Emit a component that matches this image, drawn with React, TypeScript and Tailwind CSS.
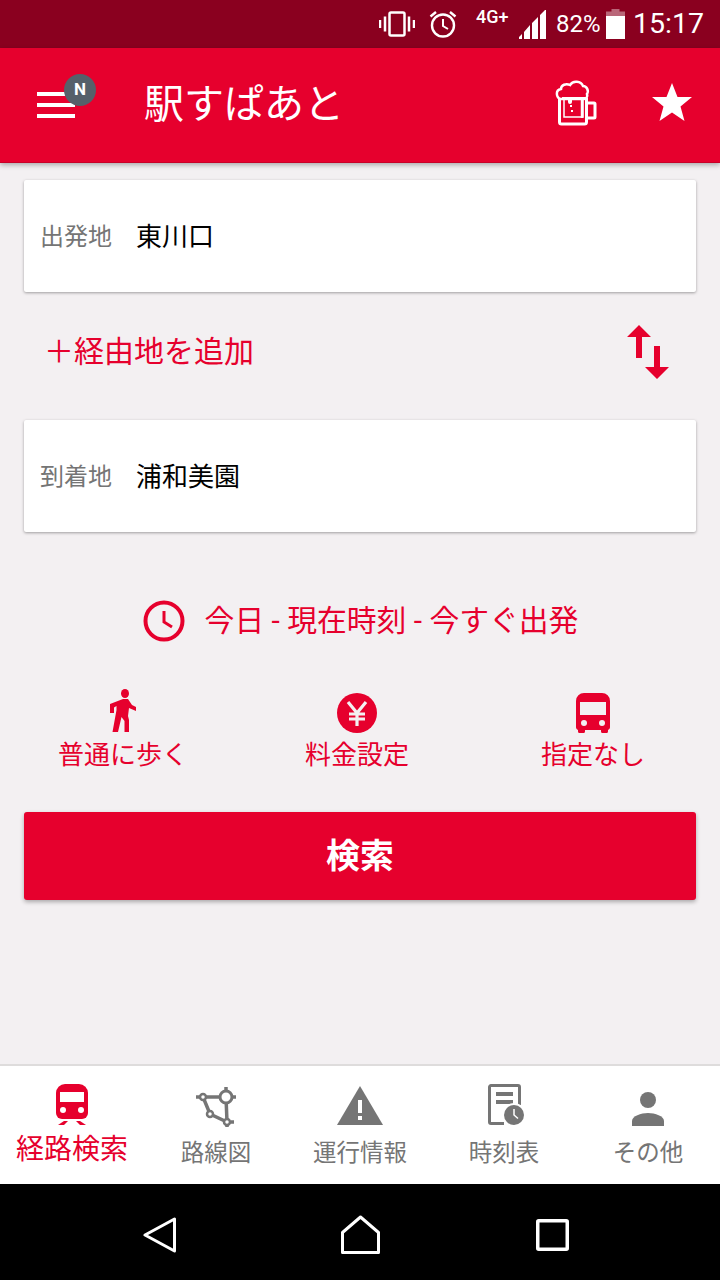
import React from "react";

const FONT = "font-['Roboto','Noto_Sans_CJK_JP',sans-serif]";

const StatusBar: React.FC = () => {
  return (
    <div className="flex h-12 items-center bg-[#8a001f] pl-[379px] text-white">
      <svg width="36" height="26" viewBox="0 0 36 26" fill="none">
        <rect x="10.5" y="1.5" width="15" height="23" rx="1.5" stroke="white" strokeWidth="2.5" />
        <path d="M1 9v8M6 5.5v15M30 5.5v15M35 9v8" stroke="white" strokeWidth="2.5" />
      </svg>
      <svg className="ml-[14px]" width="28" height="28" viewBox="0 0 28 28" fill="none" stroke="white">
        <circle cx="14" cy="15.5" r="11" strokeWidth="2.4" />
        <path d="M14 9v7l5 3" strokeWidth="2" />
        <path d="M1.5 6.5 7 2M26.5 6.5 21 2" strokeWidth="2.4" />
      </svg>
      <span className="mb-[15px] ml-[19px] w-[43px] text-[18px] leading-5 font-medium">4G+</span>
      <svg width="28" height="30" viewBox="0 0 28 30" fill="white" className="mt-[2px]">
        <path d="M0 29v-2l3-3v5zM5 29v-7l6-7v14zM13 29V13l6-6v22zM21 29V5l6-6v30z" />
      </svg>
      <span className="ml-[9px] w-[44px] text-[24px] leading-none font-normal whitespace-nowrap">82%</span>
      <svg width="19" height="30" viewBox="0 0 19 30" className="ml-[6px]">
        <path d="M5.5 0h8v2.500h5.500V30H0V2.500h5.500z" fill="white" fillOpacity="0.4" />
        <rect x="0" y="7" width="19" height="23" fill="white" />
      </svg>
      <span className="ml-[8px] text-[28.500px] leading-none font-normal whitespace-nowrap">15:17</span>
    </div>
  );
};

const BeerIcon: React.FC = () => (
  <svg width="54" height="56" viewBox="0 0 54 56" fill="none">
    <path d="M9.500 22v24a2 2 0 0 0 2 2h23a2 2 0 0 0 2-2V22" stroke="white" strokeWidth="3" />
    <path d="M14 23v18h19V23" stroke="white" strokeWidth="1.500" />
    <path d="M32 24v18" stroke="white" strokeWidth="2.500" />
    <path d="M37 27h7a1 1 0 0 1 1 1v13a1 1 0 0 1-1 1h-7" stroke="white" strokeWidth="3" />
    <path d="M11 23c-5-1-6-9 0-10 0-4 5-6 9-4 3-5 11-4 13 1 4 0 6 5 4 8 1 3-1 5-3 5z" fill="#e6002d" stroke="white" strokeWidth="2.500" />
    <path d="M12 21h25v3H22v2a2 2 0 0 1-4 0v-2h-6z" fill="white" />
    <rect x="20" y="29" width="2" height="2" fill="white" />
    <rect x="21" y="34" width="2" height="2" fill="white" />
  </svg>
);

const AppBar: React.FC = () => {
  return (
    <header className="relative z-10 flex h-[115px] items-center border-b border-[#c80028] bg-[#e6002d] shadow-[0_2px_5px_rgba(0,0,0,0.3)]">
      <div className="relative ml-[37px] flex w-[38px] flex-col gap-[7px]">
        <div className="h-1 bg-white" />
        <div className="h-1 bg-white" />
        <div className="h-1 bg-white" />
        <div className="absolute -top-[18px] left-[27px] flex h-8 w-8 items-center justify-center rounded-full bg-[#56606a] text-[17px] font-bold text-white">
          N
        </div>
      </div>
      <h1 className="ml-[69px] text-[40px] leading-none font-normal text-white">駅すぱあと</h1>
      <div className="ml-auto mb-[2px] mr-[116px]">
        <BeerIcon />
      </div>
      <svg className="absolute right-[27px] top-[34px]" width="42" height="40" viewBox="0 0 42 40" fill="white">
        <path d="M21 1l5.500 14H41L29.500 24.500 33.500 39 21 30.500 8.500 39l4-14.500L1 15h14.500z" />
      </svg>
    </header>
  );
};

const StationCard: React.FC<{ label: string; value: string }> = ({ label, value }) => (
  <div className="flex h-28 items-center rounded-[2px] bg-white pl-4 pt-[2px] shadow-[0_1px_3px_rgba(0,0,0,0.35)]">
    <span className="w-[96px] text-[24px] leading-none text-[#757575]">{label}</span>
    <span className="text-[26px] leading-none text-black">{value}</span>
  </div>
);

const SwapIcon: React.FC = () => (
  <svg width="42" height="54" viewBox="0 0 42 54" fill="#e6002d">
    <path d="M12 0 24 12H15V33H9V12H0z" />
    <path d="M27 21h6V42h9L30 54 18 42h9z" />
  </svg>
);

const WalkIcon: React.FC = () => (
  <svg width="28" height="44" viewBox="0 0 28 44" fill="#e6002d">
    <ellipse cx="16" cy="4.500" rx="4" ry="4.500" />
    <path d="M1 15 14 10h5l4 6 4 2v4l-7-3-1 8 1 4v12h-4.500V32l-3-4L9 43H3.500l4-22v-4L5 18.500V24H1z" />
  </svg>
);

const YenIcon: React.FC = () => (
  <svg width="40" height="40" viewBox="0 0 40 40">
    <circle cx="20" cy="20" r="20" fill="#e6002d" />
    <path d="M11 9l9 11 9-11M20 20v13M12 21h16M12 26h16" stroke="#f3f0f2" strokeWidth="3.200" fill="none" />
  </svg>
);

const BusIcon: React.FC = () => (
  <svg width="34" height="40" viewBox="0 0 34 40">
    <path d="M8 0h18a8 8 0 0 1 8 8v26a3 3 0 0 1-2 3v1.500a1.500 1.500 0 0 1-1.500 1.500h-4a1.500 1.500 0 0 1-1.500-1.500V37H9v1.500A1.500 1.500 0 0 1 7.500 40h-4A1.500 1.500 0 0 1 2 38.500V37a3 3 0 0 1-2-3V8a8 8 0 0 1 8-8z" fill="#e6002d" />
    <rect x="4" y="9" width="26" height="13" fill="#f3f0f2" />
    <circle cx="8" cy="30" r="3" fill="#f3f0f2" />
    <circle cx="26" cy="30" r="3" fill="#f3f0f2" />
  </svg>
);

const Option: React.FC<{ icon: React.ReactNode; label: string; className: string }> = ({ icon, label, className }) => (
  <div className={`flex flex-col items-center ${className}`}>
    <div className="flex h-[44px] items-end">{icon}</div>
    <span className="mt-[7px] text-[26px] leading-[30px] text-[#e6002d] whitespace-nowrap">{label}</span>
  </div>
);

const TrainIcon: React.FC = () => (
  <svg width="32" height="42" viewBox="0 0 32 42">
    <path d="M9 0h14a9 9 0 0 1 9 9v20a6 6 0 0 1-6 6H6a6 6 0 0 1-6-6V9a9 9 0 0 1 9-9z" fill="#e6002d" />
    <rect x="4" y="8" width="24" height="10" fill="white" />
    <circle cx="7" cy="26" r="3" fill="white" />
    <circle cx="25" cy="26" r="3" fill="white" />
    <path d="M2 41h6l4-4H8zM30 41h-6l-4-4h4z" fill="#e6002d" />
  </svg>
);

const RouteIcon: React.FC = () => (
  <svg width="40" height="40" viewBox="0 0 40 40" fill="none" stroke="#757575" strokeWidth="3.500" className="-mb-px">
    <path d="M7 10H30L31 35 14 27z" />
    <path d="M0 10h4M30 0v4M36 10h4M35 35h3M31 35v5" />
    <circle cx="7" cy="10" r="3" fill="white" strokeWidth="2.500" />
    <circle cx="30" cy="10" r="6" fill="white" strokeWidth="3" />
    <circle cx="14" cy="27" r="3" fill="white" strokeWidth="2.500" />
    <circle cx="31" cy="35" r="3" fill="white" strokeWidth="2.500" />
  </svg>
);

const WarnIcon: React.FC = () => (
  <svg width="46" height="40" viewBox="0 0 46 40">
    <path d="M23 0l23 39H0z" fill="#757575" />
    <rect x="21" y="14" width="4" height="13" fill="white" />
    <rect x="21" y="30" width="4" height="4" fill="white" />
  </svg>
);

const TimetableIcon: React.FC = () => (
  <svg width="38" height="42" viewBox="0 0 38 42" fill="none" className="ml-[5px]">
    <path d="M16 39.500H3a1.500 1.500 0 0 1-1.500-1.500V3A1.500 1.500 0 0 1 3 1.500h27A1.500 1.500 0 0 1 31.500 3v18" stroke="#757575" strokeWidth="3" />
    <path d="M8 8h17v4H8zM8 16h17v4H8z" fill="#757575" />
    <circle cx="26" cy="31" r="12" fill="white" />
    <circle cx="26" cy="31" r="10" fill="#757575" />
    <path d="M26 25v6l4 3.500" stroke="white" strokeWidth="1.500" />
  </svg>
);

const PersonIcon: React.FC = () => (
  <svg width="32" height="34" viewBox="0 0 32 34" fill="#757575">
    <circle cx="16" cy="8" r="8" />
    <path d="M0 34v-5c0-5 9-8 16-8s16 3 16 8v5z" />
  </svg>
);

const NavItem: React.FC<{ icon: React.ReactNode; label: string; active?: boolean }> = ({ icon, label, active }) => (
  <div className="flex w-[144px] flex-col items-center">
    <div className="flex h-[44px] items-end justify-center">{icon}</div>
    <span
      className={
        active
          ? "mt-[7px] text-[28px] leading-[34px] text-[#e6002d] whitespace-nowrap"
          : "mt-[12px] text-[23.500px] leading-[30px] text-[#757575] whitespace-nowrap"
      }
    >
      {label}
    </span>
  </div>
);

const AndroidNav: React.FC = () => (
  <div className="flex h-24 items-center bg-black pl-[143px] pt-[5px]">
    <svg width="33" height="36" viewBox="0 0 33 36" fill="none" stroke="white" strokeWidth="3" strokeLinejoin="round">
      <path d="M31.500 2v32L2 18z" />
    </svg>
    <svg className="ml-[165px]" width="39" height="39" viewBox="0 0 39 39" fill="none" stroke="white" strokeWidth="3" strokeLinejoin="round">
      <path d="M19.500 2 1.500 17.500v20h36v-20z" />
    </svg>
    <svg className="ml-[156px]" width="33" height="32" viewBox="0 0 33 32" fill="none" stroke="white" strokeWidth="3.500">
      <rect x="1.750" y="1.750" width="29.500" height="28.500" rx="1" />
    </svg>
  </div>
);

export default function App() {
  return (
    <div className={`flex h-[1280px] w-[720px] flex-col overflow-hidden bg-[#f3f0f2] ${FONT}`}>
      <StatusBar />
      <AppBar />

      <main className="flex flex-1 flex-col px-6 pt-[17px]">
        <StationCard label="出発地" value="東川口" />

        <div className="flex h-32 items-center pb-2 pl-5 pr-[27px]">
          <span className="text-[30px] leading-none text-[#e6002d]">＋経由地を追加</span>
          <div className="ml-auto">
            <SwapIcon />
          </div>
        </div>

        <StationCard label="到着地" value="浦和美園" />

        <div className="mt-[68px] flex items-center justify-center gap-5 pl-[1px]">
          <svg width="42" height="42" viewBox="0 0 42 42" fill="none" stroke="#e6002d">
            <circle cx="21" cy="21" r="18.500" strokeWidth="4" />
            <path d="M21 11v11l8 5" strokeWidth="3" />
          </svg>
          <span className="text-[29.800px] leading-none text-[#e6002d]">今日 - 現在時刻 - 今すぐ出発</span>
        </div>

        <div className="mt-[47px] flex">
          <Option icon={<WalkIcon />} label="普通に歩く" className="ml-[34px]" />
          <Option icon={<YenIcon />} label="料金設定" className="ml-[117px]" />
          <Option icon={<BusIcon />} label="指定なし" className="ml-[132px]" />
        </div>

        <button className="mt-[42px] flex h-[88px] items-center justify-center rounded-[3px] bg-[#e6002d] text-[34px] leading-none font-bold text-white shadow-[0_2px_4px_rgba(0,0,0,0.3)]">
          検索
        </button>
      </main>

      <nav className="flex h-[120px] border-t-2 border-[#dedcdc] bg-white pt-[16px]">
        <NavItem icon={<TrainIcon />} label="経路検索" active />
        <NavItem icon={<RouteIcon />} label="路線図" />
        <NavItem icon={<WarnIcon />} label="運行情報" />
        <NavItem icon={<TimetableIcon />} label="時刻表" />
        <NavItem icon={<PersonIcon />} label="その他" />
      </nav>

      <AndroidNav />
    </div>
  );
}
